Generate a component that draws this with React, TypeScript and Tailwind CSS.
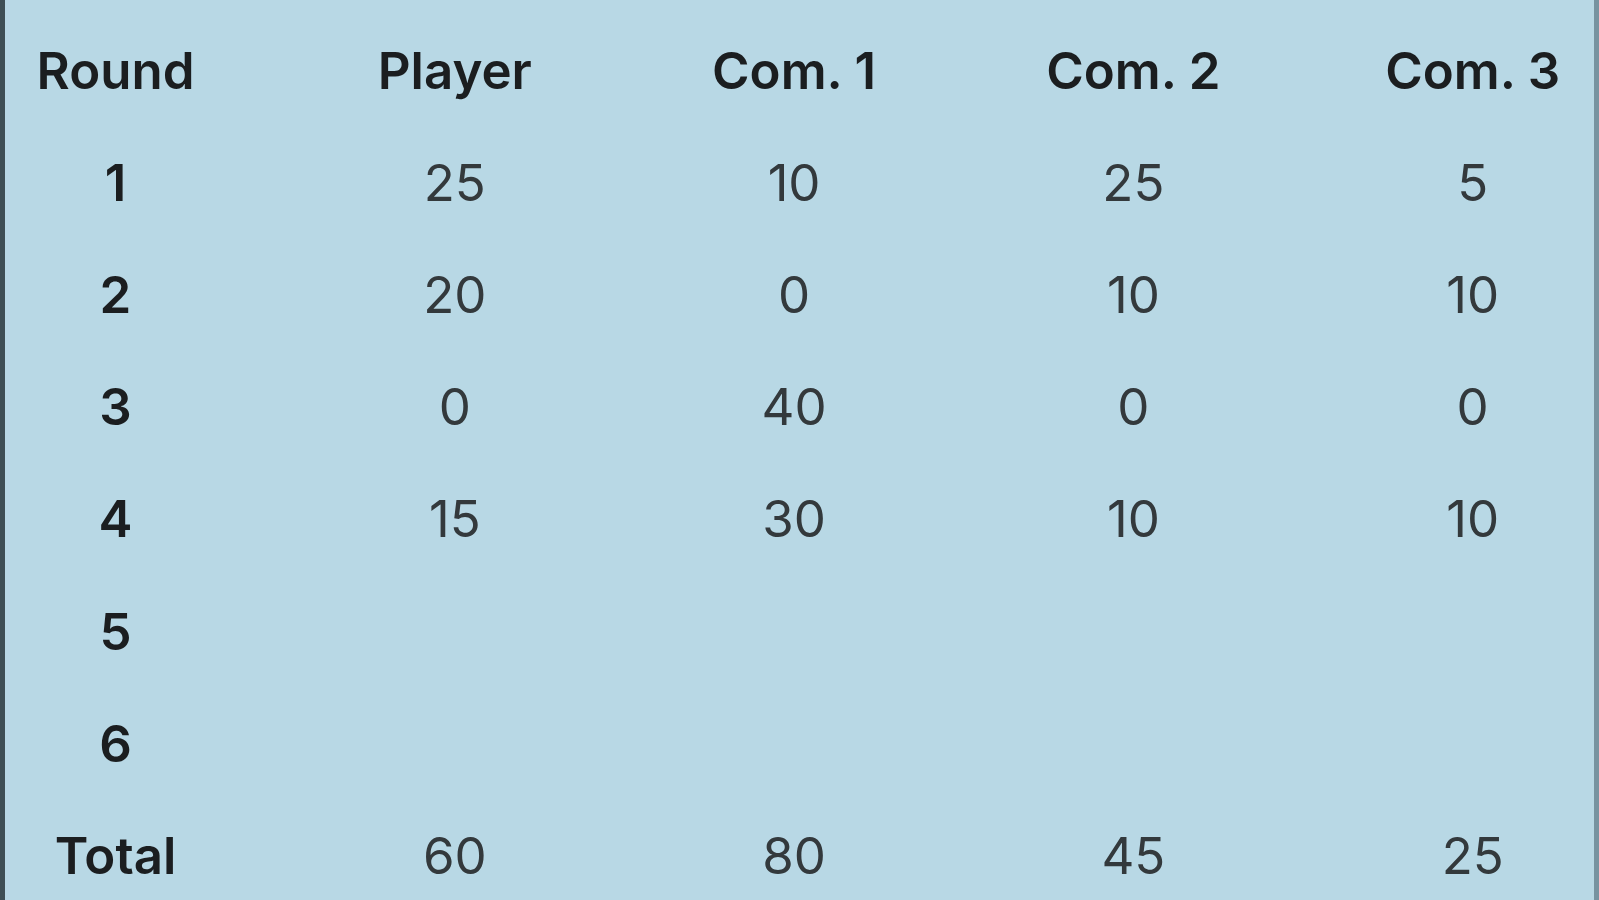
const HEADERS = ["Round", "Player", "Com. 1", "Com. 2", "Com. 3"];

const ROWS: (number | null)[][] = [
  [25, 10, 25, 5],
  [20, 0, 10, 10],
  [0, 40, 0, 0],
  [15, 30, 10, 10],
  [null, null, null, null],
  [null, null, null, null],
];

export default function App() {
  const totals = [0, 1, 2, 3].map((i) =>
    ROWS.reduce((sum, r) => sum + (r[i] ?? 0), 0)
  );

  return (
    <div
      className="h-screen w-full overflow-hidden bg-[#b8d8e5] border-l-[5px] border-l-[#3e4f55] border-r-[5px] border-r-[#7793a0]"
      style={{ fontFamily: "Inter, 'Noto Sans', sans-serif" }}
    >
      <div className="grid grid-cols-[repeat(5,215px)] gap-x-[124.3px] pl-[3px] pt-[14px] text-[51px] leading-none">
        {HEADERS.map((h) => (
          <div
            key={h}
            className="flex h-[112.2px] items-center justify-center font-semibold text-[#1b1e20]"
          >
            {h}
          </div>
        ))}

        {ROWS.map((row, i) => (
          <div key={i} className="contents">
            <div className="flex h-[112.2px] items-center justify-center font-semibold text-[#1b1e20]">
              {i + 1}
            </div>
            {row.map((v, j) => (
              <div
                key={j}
                className="flex h-[112.2px] items-center justify-center text-[#33393c]"
              >
                {v ?? ""}
              </div>
            ))}
          </div>
        ))}

        <div className="flex h-[112.2px] items-center justify-center font-semibold text-[#1b1e20]">
          Total
        </div>
        {totals.map((t, j) => (
          <div
            key={j}
            className="flex h-[112.2px] items-center justify-center text-[#33393c]"
          >
            {t}
          </div>
        ))}
      </div>
    </div>
  );
}
